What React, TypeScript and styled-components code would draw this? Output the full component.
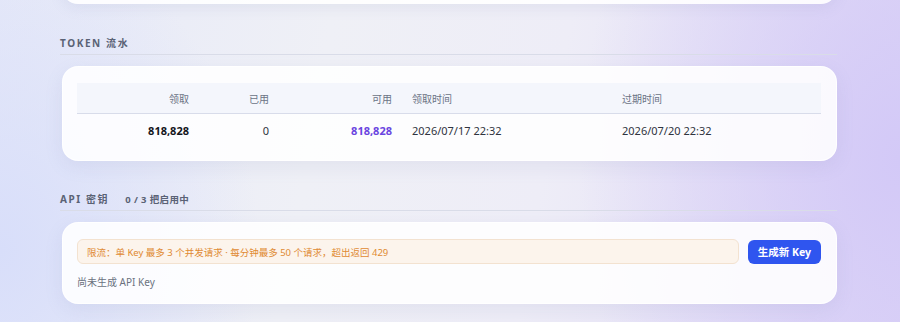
import React from 'react'
import { styled, createGlobalStyle } from 'styled-components'

const GlobalStyle = createGlobalStyle`
  html, body {
    margin: 0;
    padding: 0;
  }
  body {
    width: 900px;
    height: 322px;
    overflow: hidden;
    font-family: "Noto Sans", "Noto Sans CJK SC", sans-serif;
    background:
      radial-gradient(ellipse 260px 320px at 0px 250px, #d8defa 0%, rgba(216, 222, 250, 0) 100%),
      radial-gradient(ellipse 320px 440px at 900px 160px, #d3c9f7 0%, rgba(211, 201, 247, 0) 100%),
      linear-gradient(100deg, #e6e9f8 0%, #eff0f6 35%, #eeedf7 60%, #dfd8f6 100%);
  }
`

type Ledger = {
  claimed: string
  used: string
  available: string
  claimedAt: string
  expiresAt: string
}

const ledger: Ledger[] = [
  {
    claimed: '818,828',
    used: '0',
    available: '818,828',
    claimedAt: '2026/07/17 22:32',
    expiresAt: '2026/07/20 22:32',
  },
]

function App(): JSX.Element {
  return (
    <>
      <GlobalStyle />
      <Page>
        <TopCard />

        <Section>
          <SectionTitle>
            <TitleText>TOKEN 流水</TitleText>
          </SectionTitle>
          <Card>
            <Table>
              <HeadRow>
                <Cell $align="right">领取</Cell>
                <Cell $align="right">已用</Cell>
                <Cell $align="right">可用</Cell>
                <Cell>领取时间</Cell>
                <Cell>过期时间</Cell>
              </HeadRow>
              {ledger.map((row) => (
                <BodyRow key={row.claimedAt}>
                  <Cell $align="right" $strong>
                    {row.claimed}
                  </Cell>
                  <Cell $align="right">{row.used}</Cell>
                  <Cell $align="right" $strong $accent>
                    {row.available}
                  </Cell>
                  <Cell>{row.claimedAt}</Cell>
                  <Cell>{row.expiresAt}</Cell>
                </BodyRow>
              ))}
            </Table>
          </Card>
        </Section>

        <Section>
          <SectionTitle>
            <TitleText>API 密钥</TitleText>
            <TitleCount>0 / 3 把启用中</TitleCount>
          </SectionTitle>
          <Card>
            <KeyToolbar>
              <Notice>限流：单 Key 最多 3 个并发请求 · 每分钟最多 50 个请求，超出返回 429</Notice>
              <PrimaryButton type="button">生成新 Key</PrimaryButton>
            </KeyToolbar>
            <EmptyText>尚未生成 API Key</EmptyText>
          </Card>
        </Section>
      </Page>
    </>
  )
}

export default App

const Page = styled.div`
  width: 775px;
  margin: 0 0 0 62px;
  display: flex;
  flex-direction: column;
`

const TopCard = styled.div`
  height: 40px;
  margin-top: -36px;
  border-radius: 16px;
  background: rgba(255, 255, 255, 0.9);
  box-shadow: 0 4px 14px rgba(120, 130, 180, 0.12);
`

const Section = styled.section`
  display: flex;
  flex-direction: column;
  margin-top: 30px;

  & + & {
    margin-top: 29px;
  }
`

const SectionTitle = styled.div`
  display: flex;
  align-items: baseline;
  gap: 16px;
  margin-left: -2px;
  padding: 2px 0 4px 0;
  height: 14px;
  border-bottom: 1px solid #d9dce8;
  margin-bottom: 11px;
`

const TitleText = styled.span`
  font-size: 10px;
  line-height: 14px;
  font-weight: 700;
  letter-spacing: 0.16em;
  color: #5a6275;
`

const TitleCount = styled.span`
  font-size: 9.5px;
  line-height: 14px;
  font-weight: 700;
  letter-spacing: 0.04em;
  color: #5a6275;
`

const Card = styled.div`
  display: flex;
  flex-direction: column;
  padding: 16px 15px 14px 14px;
  border-radius: 16px;
  background: rgba(255, 255, 255, 0.88);
  border: 1px solid rgba(255, 255, 255, 0.9);
  box-shadow: 0 6px 18px rgba(120, 130, 180, 0.12);
`

const Table = styled.div`
  display: flex;
  flex-direction: column;
`

const rowColumns = '122px 80px 123px 210px 1fr'

const HeadRow = styled.div`
  display: grid;
  grid-template-columns: ${rowColumns};
  align-items: center;
  height: 30px;
  background: #f4f6fc;
  border-bottom: 1px solid #d8dcea;
  color: #6b7385;
  font-size: 10px;
`

const BodyRow = styled.div`
  display: grid;
  grid-template-columns: ${rowColumns};
  align-items: center;
  height: 32px;
  color: #2f3440;
  font-size: 11px;
`

const Cell = styled.div<{ $align?: 'left' | 'right'; $strong?: boolean; $accent?: boolean }>`
  padding: 0 10px;
  text-align: ${(p) => p.$align ?? 'left'};
  font-weight: ${(p) => (p.$strong ? 700 : 400)};
  color: ${(p) => (p.$accent ? '#6a45e0' : p.$strong ? '#14161c' : 'inherit')};
  white-space: nowrap;
`

const KeyToolbar = styled.div`
  display: flex;
  align-items: center;
  gap: 9px;
`

const Notice = styled.div`
  flex: 1;
  height: 23px;
  display: flex;
  align-items: center;
  padding: 0 9px;
  background: #fcf4ec;
  border: 1px solid #f3e2d0;
  border-radius: 6px;
  color: #e08a32;
  font-size: 9.5px;
  white-space: nowrap;
`

const PrimaryButton = styled.button`
  height: 24px;
  padding: 0 10px;
  background: #2f55ef;
  border: none;
  border-radius: 6px;
  color: #ffffff;
  font-family: inherit;
  font-size: 10.5px;
  font-weight: 700;
  outline: none;
  white-space: nowrap;

  &:hover {
    cursor: pointer;
  }
`

const EmptyText = styled.div`
  margin-top: 11px;
  font-size: 10px;
  line-height: 14px;
  color: #6b7280;
`
